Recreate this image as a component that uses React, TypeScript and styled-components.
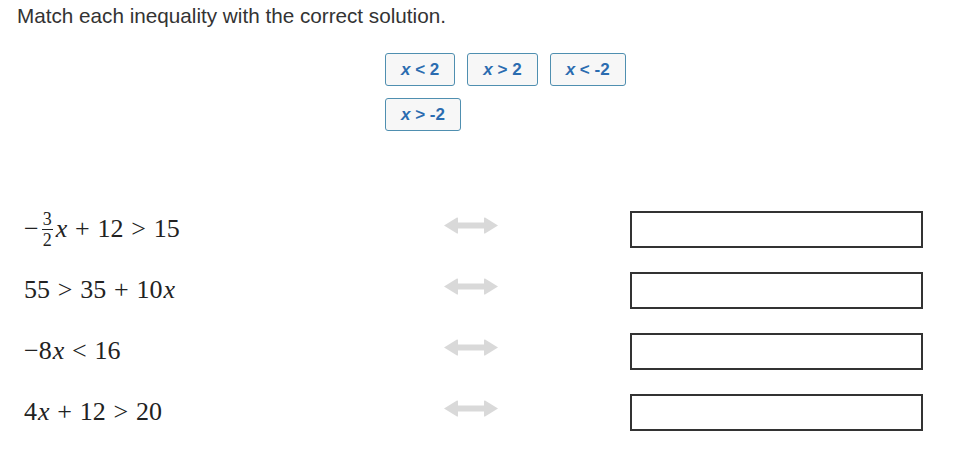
import React from 'react'
import styled, { createGlobalStyle } from 'styled-components'

const Global = createGlobalStyle`
  html, body {
    margin: 0;
    padding: 0;
    background: #fff;
  }
  body {
    font-family: "Liberation Sans", Arial, sans-serif;
    color: #333;
  }
`

const Page = styled.div`
  width: 969px;
  height: 467px;
  overflow: hidden;
`

const Title = styled.div`
  padding: 3px 0 0 17px;
  font-size: 20.7px;
  line-height: 25px;
  color: #333;
`

const Bank = styled.div`
  display: flex;
  flex-wrap: wrap;
  gap: 12px 12px;
  width: 250px;
  margin: 25px 0 0 385px;
`

const Chip = styled.div`
  box-sizing: border-box;
  height: 33px;
  padding: 0 15px;
  display: flex;
  align-items: center;
  justify-content: center;
  border: 1px solid #4f8fb0;
  border-radius: 3px;
  background: #f7f7f7;
  color: #2b6cb0;
  font-weight: bold;
  font-size: 17px;
  white-space: pre;
`

const Var = styled.i`
  font-style: italic;
`

const Rows = styled.div`
  margin-top: 68px;
  padding-left: 24px;
  display: grid;
  grid-template-columns: 419px 56px 131px 293px;
  grid-auto-rows: 61px;
`

const Cell = styled.div<{ $col: number }>`
  grid-column: ${(p) => p.$col};
  display: flex;
  align-items: center;
`

const Math = styled.span`
  font-family: "Liberation Serif", "DejaVu Serif", serif;
  font-size: 26px;
  color: #222;
  display: inline-flex;
  align-items: center;
  white-space: pre;
  margin-top: -1px;
`

const MI = styled.span`
  font-style: italic;
  margin-left: 1px;
`

const Op = styled.span`
  margin: 0 0.3em;
`

const Frac = styled.span`
  display: inline-flex;
  flex-direction: column;
  align-items: center;
  font-size: 18px;
  line-height: 16px;
  margin: 0 2px 0 3px;
  & > span:first-child {
    border-bottom: 1.5px solid #222;
    padding: 0 1px 2px;
  }
  & > span:last-child {
    padding-top: 2px;
  }
`

const ArrowBox = styled.div`
  display: flex;
  align-items: center;
  margin-top: -8px;
`

const Target = styled.div`
  box-sizing: border-box;
  width: 293px;
  height: 37px;
  border: 2px solid #333;
  background: #fff;
`

const Arrow = () => (
  <svg width="56" height="19" viewBox="0 0 56 19">
    <path
      d="M1 9.5 L14 1.5 Q15 1 15 2.5 L15 6.5 L41 6.5 L41 2.5 Q41 1 42 1.5 L55 9.5 L42 17.5 Q41 18 41 16.5 L41 12.5 L15 12.5 L15 16.5 Q15 18 14 17.5 Z"
      fill="#d9d9d9"
    />
  </svg>
)

const chips = [
  ['x', ' < 2'],
  ['x', ' > 2'],
  ['x', ' < -2'],
  ['x', ' > -2'],
]

const equations: React.ReactNode[] = [
  <Math>
    {'−'}
    <Frac>
      <span>3</span>
      <span>2</span>
    </Frac>
    <MI>x</MI>
    <Op>+</Op>
    {'12'}
    <Op>{'>'}</Op>
    {'15'}
  </Math>,
  <Math>
    {'55'}
    <Op>{'>'}</Op>
    {'35'}
    <Op>+</Op>
    {'10'}
    <MI>x</MI>
  </Math>,
  <Math>
    {'−8'}
    <MI>x</MI>
    <Op>{'<'}</Op>
    {'16'}
  </Math>,
  <Math>
    {'4'}
    <MI>x</MI>
    <Op>+</Op>
    {'12'}
    <Op>{'>'}</Op>
    {'20'}
  </Math>,
]

export default function App() {
  return (
    <Page>
      <Global />
      <Title>Match each inequality with the correct solution.</Title>
      <Bank>
        {chips.map(([v, rest], i) => (
          <Chip key={i}>
            <Var>{v}</Var>
            {rest}
          </Chip>
        ))}
      </Bank>
      <Rows>
        {equations.map((eq, i) => (
          <React.Fragment key={i}>
            <Cell $col={1}>{eq}</Cell>
            <Cell $col={2}>
              <ArrowBox>
                <Arrow />
              </ArrowBox>
            </Cell>
            <Cell $col={4}>
              <Target />
            </Cell>
          </React.Fragment>
        ))}
      </Rows>
    </Page>
  )
}
